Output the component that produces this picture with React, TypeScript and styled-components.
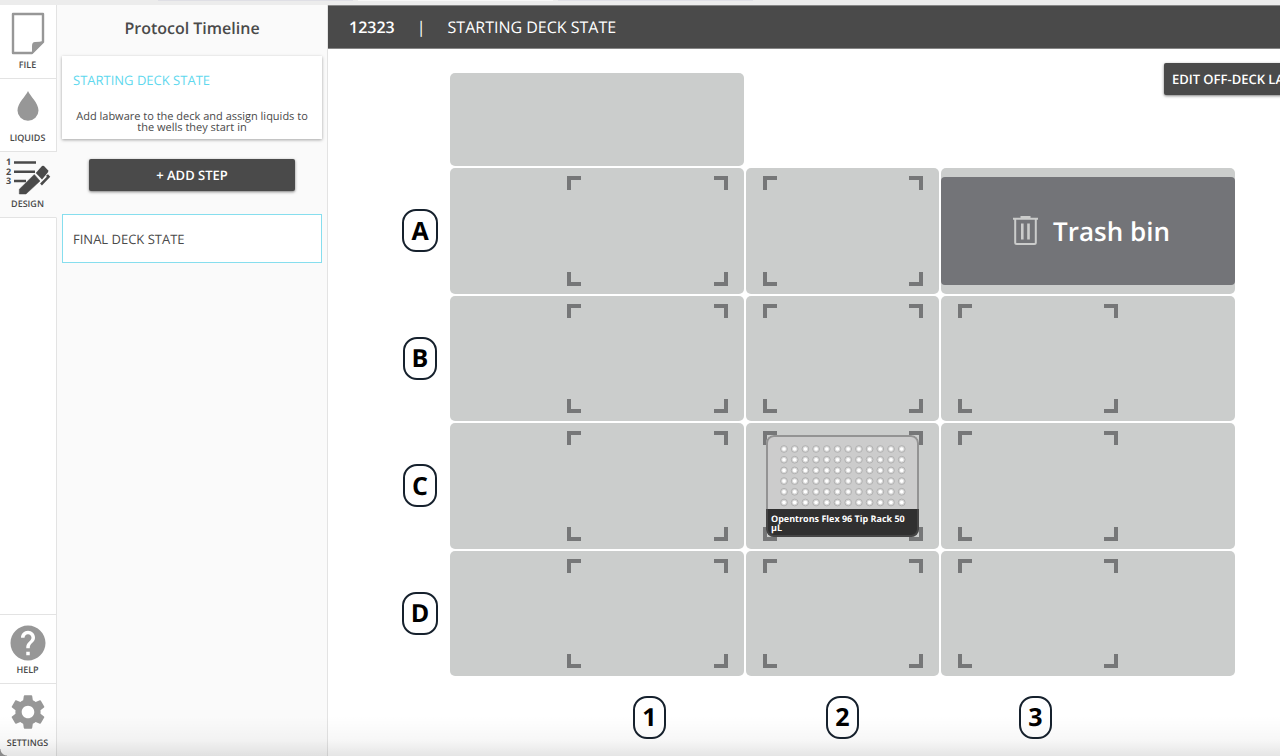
import React from 'react'
import styled, { createGlobalStyle, css } from 'styled-components'
import { MdHelp, MdSettings } from 'react-icons/md'

const color = {
  dark: '#4a4a4a',
  icon: '#979797',
  panel: '#fafafa',
  line: '#e3e3e3',
  slot: '#cbcdcc',
  corner: '#767778',
  bin: '#737478',
  accent: '#5fd8ee',
  label: '#16212d',
}

const GlobalStyle = createGlobalStyle`
  *, *::before, *::after { box-sizing: border-box; }
  body {
    margin: 0;
    background: #fff;
    color: ${color.dark};
    font-family: "Open Sans", "Liberation Sans", sans-serif;
    text-rendering: geometricPrecision;
  }
  button { font: inherit; text-rendering: inherit; border: 0; cursor: pointer; }
  h1, h2, h3, p { margin: 0; }
`

const Page = styled.div`
  display: flex;
  flex-direction: column;
  min-height: 100vh;
  position: relative;
  overflow: hidden;
`

const BrowserEdge = styled.div`
  display: flex;
  gap: 5px;
  flex: none;
  height: 5px;
  padding-left: 158px;
  background: #ececec;
`

const BrowserTab = styled.span<{ $active?: boolean }>`
  width: 195px;
  height: 1px;
  background: ${p => (p.$active ? '#f8f8f8' : '#dfdfe5')};
`

const Body = styled.div`
  display: flex;
  flex: 1;
`

const Nav = styled.nav`
  display: flex;
  flex-direction: column;
  flex: none;
  width: 57px;
`

const NavSpacer = styled.div`
  flex: 1;
  border-right: 1px solid ${color.line};
`

const NavButton = styled.button<{ $active?: boolean; $height: number }>`
  display: flex;
  flex-direction: column;
  align-items: center;
  justify-content: flex-end;
  height: ${p => p.$height}px;
  padding: 0 1px 7px 0;
  background: #fff;
  color: ${color.icon};
  border-right: 1px solid ${color.line};
  border-bottom: 1px solid ${color.line};
  ${p =>
    p.$active &&
    css`
      background: ${color.panel};
      color: ${color.dark};
      border-right-color: ${color.panel};
    `}
  ${NavSpacer} ~ & {
    border-bottom: 0;
    border-top: 1px solid ${color.line};
  }
`

const NavLabel = styled.span`
  font-size: 9px;
  font-weight: 600;
  line-height: 12px;
  color: ${color.dark};
`

const NavIcon = styled.span<{ $gap: number }>`
  display: flex;
  margin-bottom: ${p => p.$gap}px;
`

const Sidebar = styled.aside`
  display: flex;
  flex-direction: column;
  flex: none;
  width: 271px;
  padding: 0 5px;
  background: ${color.panel};
  border-right: 1px solid ${color.line};
`

const SidebarTitle = styled.h2`
  height: 51px;
  padding-top: 11px;
  font-size: 16px;
  font-weight: 600;
  line-height: 24px;
  text-align: center;
`

const StepCard = styled.section`
  height: 83px;
  background: #fff;
  box-shadow: 0 1px 3px rgba(0, 0, 0, 0.35);
`

const StepName = styled.h3`
  padding: 14px 11px 21px;
  font-size: 13px;
  font-weight: 400;
  line-height: 20px;
  color: ${color.accent};
`

const StepHint = styled.p`
  padding: 0 12px;
  font-size: 11px;
  line-height: 11px;
  text-align: center;
`

const DarkButton = styled.button`
  height: 32px;
  padding: 0 8px;
  background: ${color.dark};
  color: #fff;
  border-radius: 2px;
  box-shadow: 0 1px 3px rgba(0, 0, 0, 0.5);
  font-size: 13px;
  font-weight: 600;
  line-height: 16px;
  white-space: nowrap;
`

const AddStepButton = styled(DarkButton)`
  margin: 20px 27px 23px;
`

const FinalStep = styled.button`
  height: 49px;
  padding: 0 10px;
  background: #fff;
  border: 1px solid #86deee;
  color: ${color.dark};
  font-size: 13px;
  text-align: left;
`

const Main = styled.main`
  display: flex;
  flex-direction: column;
  flex: 1;
  min-width: 0;
`

const TitleBar = styled.header`
  display: flex;
  align-items: center;
  gap: 22px;
  height: 44px;
  padding: 0 21px;
  background: ${color.dark};
  border-top: 1px solid #868686;
  border-bottom: 1px solid #868686;
  color: #fff;
  font-size: 16px;
`

const ProtocolName = styled.h1`
  font-size: 16px;
  font-weight: 600;
`

const Stage = styled.div`
  display: flex;
  flex: 1;
  position: relative;
  padding: 24px 45px 0 62px;
`

const OffDeckButton = styled(DarkButton)`
  position: absolute;
  top: 14px;
  right: -57px;
`

const Deck = styled.div`
  display: grid;
  flex: 1;
  grid-template-columns: 60px 294fr 193fr 294fr;
  grid-template-rows: 93px repeat(4, minmax(120px, 1fr)) 78px;
  column-gap: 2px;
  row-gap: 2px;
  margin-left: -2px;
`

const Expansion = styled.div`
  grid-column: 2;
  background: ${color.slot};
  border-radius: 5px;
`

const LabelCell = styled.div<{ $side?: 'left' | 'right'; $newRow?: boolean }>`
  display: flex;
  align-items: center;
  justify-content: center;
  ${p => p.$newRow && 'grid-column: 1; padding-left: 4px;'}
  ${p => p.$side === 'left' && 'grid-column: 2; padding-left: 105px;'}
  ${p => p.$side === 'right' && 'padding-right: 105px;'}
`

const DeckLabel = styled.span`
  display: flex;
  align-items: center;
  height: 43px;
  padding: 0 7px;
  border: 2px solid ${color.label};
  border-radius: 14px;
  color: #000;
  font-size: 25px;
  font-weight: 700;
`

const Slot = styled.div<{ $column: number }>`
  display: flex;
  position: relative;
  min-width: 0;
  padding: ${p => ['8px 16px 8px 117px', '8px 16px 8px 17px', '8px 117px 8px 17px'][p.$column]};
  background: ${color.slot};
  border-radius: 5px;
`

const BinSlot = styled.div`
  display: flex;
  padding: 9px 0;
  background: ${color.slot};
  border-radius: 5px;
`

const Bin = styled.div`
  display: flex;
  flex: 1;
  align-items: center;
  justify-content: center;
  gap: 15px;
  padding-left: 7px;
  background: ${color.bin};
  border-radius: 4px;
  color: #fff;
  font-size: 26px;
  font-weight: 600;
`

const Corners = styled.div`
  display: grid;
  flex: 1;
  grid-template-columns: 14px 14px;
  grid-template-rows: 14px 14px;
  justify-content: space-between;
  align-content: space-between;
`

const Corner = styled.span<{ $v: 'top' | 'bottom'; $h: 'left' | 'right' }>`
  border: 0 solid ${color.corner};
  border-${p => p.$v}-width: 4px;
  border-${p => p.$h}-width: 4px;
`

const Labware = styled.div`
  display: flex;
  flex-direction: column;
  justify-content: space-between;
  position: absolute;
  inset: 12px 20px;
  overflow: hidden;
  background: #cccccc;
  border-radius: 8px;
  &::after {
    content: '';
    position: absolute;
    inset: 0;
    border: 2px solid rgba(90, 90, 90, 0.5);
    border-radius: 8px;
  }
`

const WellArea = styled.div`
  display: flex;
  justify-content: center;
  height: 73px;
  padding-top: 7px;
`

const LabwareName = styled.p`
  height: 28px;
  padding: 5px 9px 0 5px;
  background: #303030;
  color: #fff;
  font-size: 9px;
  font-weight: 700;
  line-height: 9px;
`

const BottomShade = styled.div`
  position: absolute;
  inset: auto 0 0 0;
  height: 40px;
  background: linear-gradient(rgba(0, 0, 0, 0), rgba(0, 0, 0, 0.03) 60%, rgba(0, 0, 0, 0.1));
  pointer-events: none;
`

const WindowCorner = styled.div`
  position: absolute;
  bottom: 0;
  left: 0;
  width: 7px;
  height: 7px;
  background: radial-gradient(circle at 100% 0, transparent 6px, #8a8a8a 7px);
  pointer-events: none;
`

const FileIcon = () => (
  <svg width="34" height="43" viewBox="0 0 34 43" aria-hidden="true">
    <path d="M2 2H32V30L21 41H2Z" fill="none" stroke="currentColor" strokeWidth="2.400" strokeLinejoin="round" />
    <path d="M32 29L21 42V34Q21 30 24 30Q29 30 32 29Z" fill="currentColor" />
  </svg>
)

const DropIcon = () => (
  <svg width="22" height="30" viewBox="0 0 22 30" aria-hidden="true">
    <path d="M11 0C9 5 0.5 12 0.5 19.5A10.5 10.3 0 0 0 21.500 19.500C21.500 12 13 5 11 0Z" fill="currentColor" />
  </svg>
)

const DesignIcon = () => (
  <svg width="44" height="38" viewBox="0 0 44 38" overflow="visible" aria-hidden="true" fill="currentColor">
    <g fontSize="9" fontWeight="700">
      <text x="0" y="9">1</text>
      <text x="0" y="19">2</text>
      <text x="0" y="28">3</text>
    </g>
    <path d="M8 6.500H30M8 15.700H29M8 25H20" stroke="currentColor" strokeWidth="2.500" />
    <path d="M13.300 38V33.300L28.300 18.500L34 25L20 38Z" stroke="currentColor" strokeWidth="0.500" />
    <path d="M29.800 17L36 10Q37 9.300 38 10L42 14.200Q42.600 15.200 42 16.200L36 23.400Z" />
    <path d="M41 19L42.500 20.800L35 28.500" fill="none" stroke="currentColor" strokeWidth="2.600" />
  </svg>
)

const TrashIcon = () => (
  <svg width="25" height="30" viewBox="0 0 25 30" aria-hidden="true" fill="none" stroke="#cbcccb">
    <path d="M0 2.700H25M7.500 1H17.500" strokeWidth="2" />
    <path d="M2.200 3V26.500Q2.200 28 3.700 28H21.300Q22.800 28 22.800 26.500V3" strokeWidth="2" />
    <path d="M9.300 7.500V23.500M15.500 7.500V23.500" strokeWidth="2.600" />
  </svg>
)

const wellPitch = 10.7
const Wells = () => (
  <svg width="126" height="72" viewBox="0 0 126 72" overflow="visible" aria-hidden="true">
    {Array.from({ length: 72 }, (_, i) => {
      const cx = 4 + (i % 12) * wellPitch
      const cy = 7 + Math.floor(i / 12) * wellPitch
      return (
        <g key={i}>
          <circle cx={cx} cy={cy} r="3.400" fill="#d8d8d8" stroke="#a8a8a8" strokeWidth="0.800" />
          <circle cx={cx} cy={cy} r="1.800" fill="#fff" />
        </g>
      )
    })}
  </svg>
)

const SlotCorners = () => (
  <Corners>
    <Corner $v="top" $h="left" />
    <Corner $v="top" $h="right" />
    <Corner $v="bottom" $h="left" />
    <Corner $v="bottom" $h="right" />
  </Corners>
)

const TipRack = () => (
  <Labware>
    <WellArea>
      <Wells />
    </WellArea>
    <LabwareName>Opentrons Flex 96 Tip Rack 50 µL</LabwareName>
  </Labware>
)

const TrashBin = () => (
  <BinSlot>
    <Bin>
      <TrashIcon />
      Trash bin
    </Bin>
  </BinSlot>
)

export default function App() {
  return (
    <Page>
      <GlobalStyle />
      <BrowserEdge>
        <BrowserTab />
        <BrowserTab $active />
        <BrowserTab />
      </BrowserEdge>
      <Body>
        <Nav>
          <NavButton $height={74}>
            <NavIcon $gap={4}><FileIcon /></NavIcon>
            <NavLabel>FILE</NavLabel>
          </NavButton>
          <NavButton $height={73}>
            <NavIcon $gap={11}><DropIcon /></NavIcon>
            <NavLabel>LIQUIDS</NavLabel>
          </NavButton>
          <NavButton $height={66} $active>
            <NavIcon $gap={4}><DesignIcon /></NavIcon>
            <NavLabel>DESIGN</NavLabel>
          </NavButton>
          <NavSpacer />
          <NavButton $height={69}>
            <NavIcon $gap={0}><MdHelp size={42} /></NavIcon>
            <NavLabel>HELP</NavLabel>
          </NavButton>
          <NavButton $height={73}>
            <NavIcon $gap={4}><MdSettings size={42} /></NavIcon>
            <NavLabel>SETTINGS</NavLabel>
          </NavButton>
        </Nav>
        <Sidebar>
          <SidebarTitle>Protocol Timeline</SidebarTitle>
          <StepCard>
            <StepName>STARTING DECK STATE</StepName>
            <StepHint>Add labware to the deck and assign liquids to the wells they start in</StepHint>
          </StepCard>
          <AddStepButton>+ ADD STEP</AddStepButton>
          <FinalStep>FINAL DECK STATE</FinalStep>
        </Sidebar>
        <Main>
          <TitleBar>
            <ProtocolName>12323</ProtocolName>
            <span>|</span>
            <span>STARTING DECK STATE</span>
          </TitleBar>
          <Stage>
            <Deck>
              <Expansion />
              {['A', 'B', 'C', 'D'].map(row => (
                <React.Fragment key={row}>
                  <LabelCell $newRow>
                    <DeckLabel>{row}</DeckLabel>
                  </LabelCell>
                  {[0, 1, 2].map(column =>
                    row === 'A' && column === 2 ? (
                      <TrashBin key={column} />
                    ) : (
                      <Slot key={column} $column={column}>
                        <SlotCorners />
                        {row === 'C' && column === 1 && <TipRack />}
                      </Slot>
                    )
                  )}
                </React.Fragment>
              ))}
              <LabelCell $side="left"><DeckLabel>1</DeckLabel></LabelCell>
              <LabelCell><DeckLabel>2</DeckLabel></LabelCell>
              <LabelCell $side="right"><DeckLabel>3</DeckLabel></LabelCell>
            </Deck>
            <OffDeckButton>EDIT OFF-DECK LABWARE</OffDeckButton>
          </Stage>
        </Main>
      </Body>
      <BottomShade />
      <WindowCorner />
    </Page>
  )
}
